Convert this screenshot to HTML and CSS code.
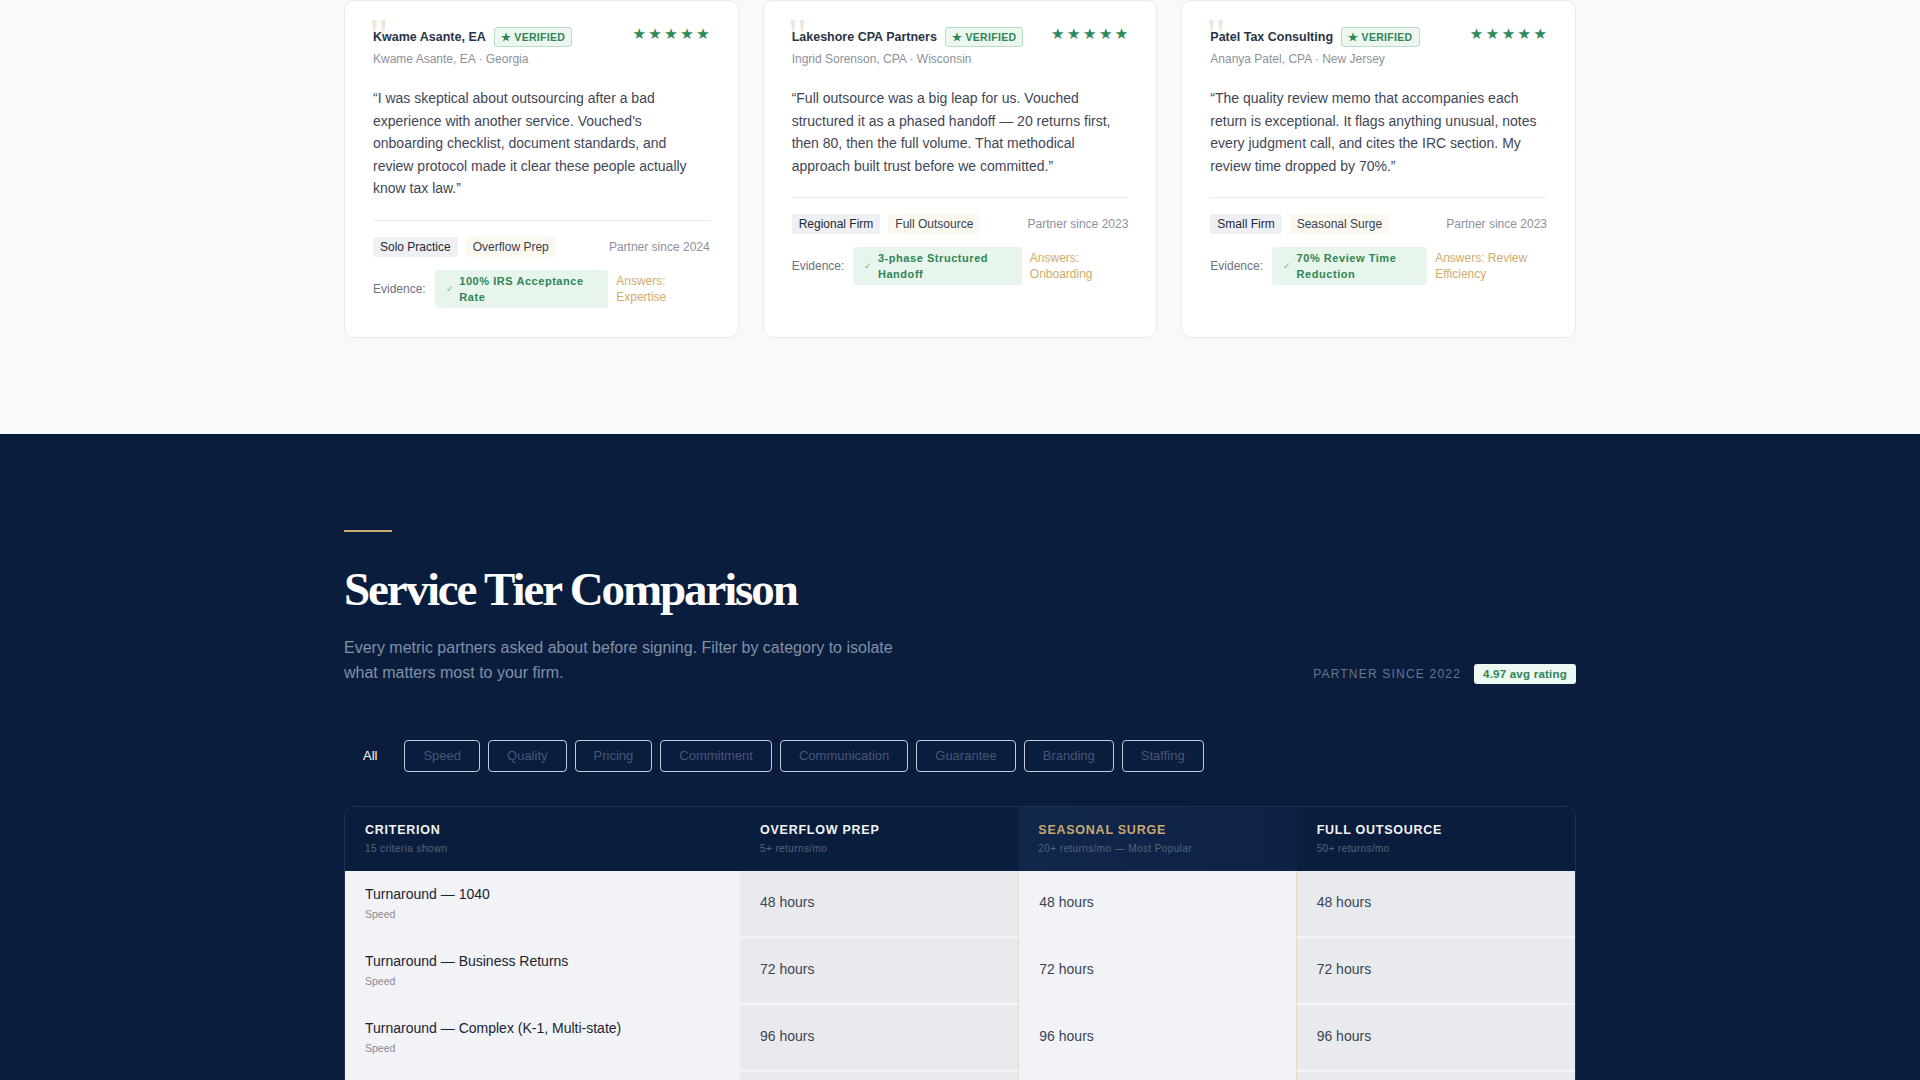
FILE: index.html
```html
<!DOCTYPE html>
<html lang="en">
<head>
    <meta charset="UTF-8">
    <meta name="viewport" content="width=device-width, initial-scale=1.0">
    <title>Vouched — Partners &amp; Service Tiers</title>
    <link rel="stylesheet" href="styles.css">
</head>
<body>
    <section class="reviews">
        <div class="wrap review-grid">
            <article class="review-card">
                <div class="review-head">
                    <div>
                        <div class="name-row"><span class="firm">Kwame Asante, EA</span><span class="verified">★ Verified</span></div>
                        <div class="person">Kwame Asante, EA · Georgia</div>
                    </div>
                    <div class="stars">★★★★★</div>
                </div>
                <p class="quote">“I was skeptical about outsourcing after a bad experience with another service. Vouched's onboarding checklist, document standards, and review protocol made it clear these people actually know tax law.”</p>
                <div class="review-foot">
                    <div class="tags">
                        <span class="tag">Solo Practice</span>
                        <span class="tag tag-tier">Overflow Prep</span>
                        <span class="since">Partner since 2024</span>
                    </div>
                    <div class="evidence">
                        <span class="ev-label">Evidence:</span>
                        <span class="ev-chip"><span class="ev-check">✓</span><span>100% IRS Acceptance Rate</span></span>
                        <span class="answers">Answers: Expertise</span>
                    </div>
                </div>
            </article>

            <article class="review-card">
                <div class="review-head">
                    <div>
                        <div class="name-row"><span class="firm">Lakeshore CPA Partners</span><span class="verified">★ Verified</span></div>
                        <div class="person">Ingrid Sorenson, CPA · Wisconsin</div>
                    </div>
                    <div class="stars">★★★★★</div>
                </div>
                <p class="quote">“Full outsource was a big leap for us. Vouched structured it as a phased handoff — 20 returns first, then 80, then the full volume. That methodical approach built trust before we committed.”</p>
                <div class="review-foot">
                    <div class="tags">
                        <span class="tag">Regional Firm</span>
                        <span class="tag tag-tier">Full Outsource</span>
                        <span class="since">Partner since 2023</span>
                    </div>
                    <div class="evidence">
                        <span class="ev-label">Evidence:</span>
                        <span class="ev-chip"><span class="ev-check">✓</span><span>3-phase Structured Handoff</span></span>
                        <span class="answers">Answers: Onboarding</span>
                    </div>
                </div>
            </article>

            <article class="review-card">
                <div class="review-head">
                    <div>
                        <div class="name-row"><span class="firm">Patel Tax Consulting</span><span class="verified">★ Verified</span></div>
                        <div class="person">Ananya Patel, CPA · New Jersey</div>
                    </div>
                    <div class="stars">★★★★★</div>
                </div>
                <p class="quote">“The quality review memo that accompanies each return is exceptional. It flags anything unusual, notes every judgment call, and cites the IRC section. My review time dropped by 70%.”</p>
                <div class="review-foot">
                    <div class="tags">
                        <span class="tag">Small Firm</span>
                        <span class="tag tag-tier">Seasonal Surge</span>
                        <span class="since">Partner since 2023</span>
                    </div>
                    <div class="evidence">
                        <span class="ev-label">Evidence:</span>
                        <span class="ev-chip"><span class="ev-check">✓</span><span>70% Review Time Reduction</span></span>
                        <span class="answers">Answers: Review Efficiency</span>
                    </div>
                </div>
            </article>
        </div>
    </section>

    <section class="tiers">
        <div class="wrap">
            <div class="tiers-head">
                <div>
                    <div class="gold-rule"></div>
                    <h2>Service Tier Comparison</h2>
                    <p class="lead">Every metric partners asked about before signing. Filter by category to isolate what matters most to your firm.</p>
                </div>
                <div class="tiers-meta">
                    <span class="meta-since">Partner since 2022</span>
                    <span class="meta-rating">4.97 avg rating</span>
                </div>
            </div>

            <div class="filters">
                <button class="filter active">All</button>
                <button class="filter">Speed</button>
                <button class="filter">Quality</button>
                <button class="filter">Pricing</button>
                <button class="filter">Commitment</button>
                <button class="filter">Communication</button>
                <button class="filter">Guarantee</button>
                <button class="filter">Branding</button>
                <button class="filter">Staffing</button>
            </div>

            <div class="compare">
                <div class="th">
                    <div class="th-title">Criterion</div>
                    <div class="th-sub">15 criteria shown</div>
                </div>
                <div class="th">
                    <div class="th-title">Overflow Prep</div>
                    <div class="th-sub">5+ returns/mo</div>
                </div>
                <div class="th th-pop">
                    <div class="th-title">Seasonal Surge</div>
                    <div class="th-sub">20+ returns/mo — Most Popular</div>
                </div>
                <div class="th">
                    <div class="th-title">Full Outsource</div>
                    <div class="th-sub">50+ returns/mo</div>
                </div>

                <div class="crit"><div class="crit-name">Turnaround — 1040</div><div class="crit-cat">Speed</div></div>
                <div class="val">48 hours</div>
                <div class="val val-pop">48 hours</div>
                <div class="val">48 hours</div>

                <div class="crit"><div class="crit-name">Turnaround — Business Returns</div><div class="crit-cat">Speed</div></div>
                <div class="val">72 hours</div>
                <div class="val val-pop">72 hours</div>
                <div class="val">72 hours</div>

                <div class="crit"><div class="crit-name">Turnaround — Complex (K-1, Multi-state)</div><div class="crit-cat">Speed</div></div>
                <div class="val">96 hours</div>
                <div class="val val-pop">96 hours</div>
                <div class="val">96 hours</div>

                <div class="crit"><div class="crit-name">IRS Acceptance Rate</div><div class="crit-cat">Quality</div></div>
                <div class="val">99.8%</div>
                <div class="val val-pop">99.8%</div>
                <div class="val">99.8%</div>

                <div class="crit"><div class="crit-name">Review Memo per Return</div><div class="crit-cat">Quality</div></div>
                <div class="val">Included</div>
                <div class="val val-pop">Included</div>
                <div class="val">Included</div>
            </div>
        </div>
    </section>
</body>
</html>
```

FILE: styles.css
```css
*{
  box-sizing:border-box;
}
body{
  margin:0;
  font-family:'Liberation Sans', Arial, sans-serif;
  color:#1f2937;
  background:#0b1d3c;
}
.wrap{
  width:1232px;
  margin:0 auto;
}

/* testimonial cards */
.reviews{
  background:#f8f9fb;
  padding:0 0 96px;
}
.review-grid{
  display:grid;
  grid-template-columns:repeat(3, 1fr);
  gap:24px;
}
.review-card{
  position:relative;
  background:#fff;
  border:1px solid #e6e9ee;
  border-radius:10px;
  padding:26px 28px 29px;
  display:flex;
  flex-direction:column;
}
/* big pale quote mark behind the name */
.review-card::before{
  content:'"';
  position:absolute;
  top:11px;
  left:24px;
  font-family:'Liberation Serif', serif;
  font-size:48px;
  line-height:1;
  color:#efe7d6;
}
.review-head{
  position:relative;
  display:flex;
  justify-content:space-between;
  align-items:flex-start;
}
.name-row{
  display:flex;
  align-items:center;
  gap:8px;
  height:20px;
}
.firm{
  font-size:12.5px;
  font-weight:bold;
  color:#2b3445;
}
.verified{
  font-size:10.5px;
  font-weight:bold;
  text-transform:uppercase;
  letter-spacing:0.03em;
  color:#2f8555;
  background:#ecf7f0;
  border:1px solid #b9dec8;
  border-radius:3px;
  padding:0 6px;
  height:20px;
  line-height:18px;
}
.person{
  margin-top:4px;
  font-size:12px;
  line-height:17px;
  color:#8b919c;
}
.stars{
  font-family:'DejaVu Sans', sans-serif;
  font-size:15px;
  letter-spacing:2.5px;
  margin-right:-2.5px;
  color:#2e8a58;
  line-height:15px;
}
.quote{
  position:relative;
  margin:19px 0 0;
  font-size:14px;
  line-height:22.5px;
  color:#3f4656;
}
.review-foot{
  margin-top:20px;
  border-top:1px solid #eaecf0;
  padding-top:16px;
}
.tags{
  display:flex;
  align-items:center;
  gap:8px;
}
.tag{
  font-size:12px;
  line-height:20px;
  padding:0 7px;
  border-radius:3px;
  background:#eef0f3;
  color:#1f2937;
}
.tag-tier{
  background:#fbf8f0;
  color:#374151;
}
.since{
  margin-left:auto;
  font-size:12px;
  color:#8b919c;
}
.evidence{
  display:flex;
  align-items:center;
  gap:8px;
  margin-top:13px;
}
.ev-label{
  font-size:12px;
  color:#6b7280;
  flex-shrink:0;
  margin-right:1px;
}
.ev-chip{
  display:flex;
  align-items:center;
  gap:5px;
  background:#e7f5ed;
  border-radius:3px;
  padding:3px 10px 3px 11px;
  font-size:11px;
  font-weight:bold;
  letter-spacing:0.05em;
  line-height:16px;
  color:#2f8555;
}
.ev-check{
  font-size:9px;
  font-weight:normal;
  color:#86a898;
}
.answers{
  font-size:12px;
  line-height:16px;
  color:#cfab6c;
}

/* tier comparison */
.tiers{
  background:#0b1d3c;
  padding:96px 0 60px;
}
.tiers-head{
  display:flex;
  justify-content:space-between;
  align-items:flex-end;
}
.gold-rule{
  width:48px;
  height:2px;
  background:#c9a96e;
}
.tiers h2{
  margin:29px 0 0;
  font-family:'Liberation Serif', serif;
  font-size:47px;
  line-height:57px;
  letter-spacing:-0.045em;
  color:#fff;
}
.lead{
  margin:17px 0 0;
  max-width:570px;
  font-size:16px;
  line-height:25px;
  color:#8190a6;
}
.tiers-meta{
  display:flex;
  align-items:center;
  gap:13px;
  margin-bottom:1px;
}
.meta-since{
  font-size:12px;
  text-transform:uppercase;
  letter-spacing:0.1em;
  color:#66768f;
}
.meta-rating{
  font-size:11.5px;
  font-weight:bold;
  letter-spacing:0.02em;
  color:#2f8555;
  background:#eef8f2;
  border-radius:3px;
  padding:4px 9px;
}
.filters{
  display:flex;
  gap:8px;
  margin-top:55px;
}
.filter{
  font-family:inherit;
  font-size:13px;
  height:32px;
  padding:0 18px;
  border:1px solid #c3cad6;
  border-radius:4px;
  background:transparent;
  color:#46567a;
}
.filter.active{
  border-color:transparent;
  color:#fff;
}

.compare{
  margin-top:34px;
  display:grid;
  grid-template-columns:395px 1fr 1fr 1fr;
  border:1px solid #1f3152;
  border-radius:10px;
  overflow:hidden;
}
.th{
  padding:15px 20px 15px;
  background:#0b1d3c;
}
.th-title{
  font-size:12.5px;
  font-weight:bold;
  text-transform:uppercase;
  letter-spacing:0.06em;
  line-height:16px;
  color:#f1f3f6;
}
.th-sub{
  margin-top:4px;
  font-size:10px;
  line-height:14px;
  letter-spacing:0.04em;
  color:#56647c;
}
.th-pop{
  background:linear-gradient(90deg, #10264a, #0e2246);
}
.th-pop .th-title{
  color:#c9a96e;
}
.crit{
  background:#f1f3f6;
  padding:14px 20px 17px;
}
.crit-name{
  font-size:14px;
  line-height:18px;
  color:#1b2333;
}
.crit-cat{
  margin-top:5px;
  font-size:10.5px;
  line-height:13px;
  color:#858c98;
}
.val{
  display:flex;
  align-items:center;
  padding:0 20px 2px;
  background:#e8eaed;
  border-bottom:2px solid #f2f4f7;
  font-size:14px;
  color:#3b4453;
}
.val-pop{
  background:#f1f3f6;
  border-left:1px solid #e6dcc4;
  border-right:1px solid #e6dcc4;
}
```
